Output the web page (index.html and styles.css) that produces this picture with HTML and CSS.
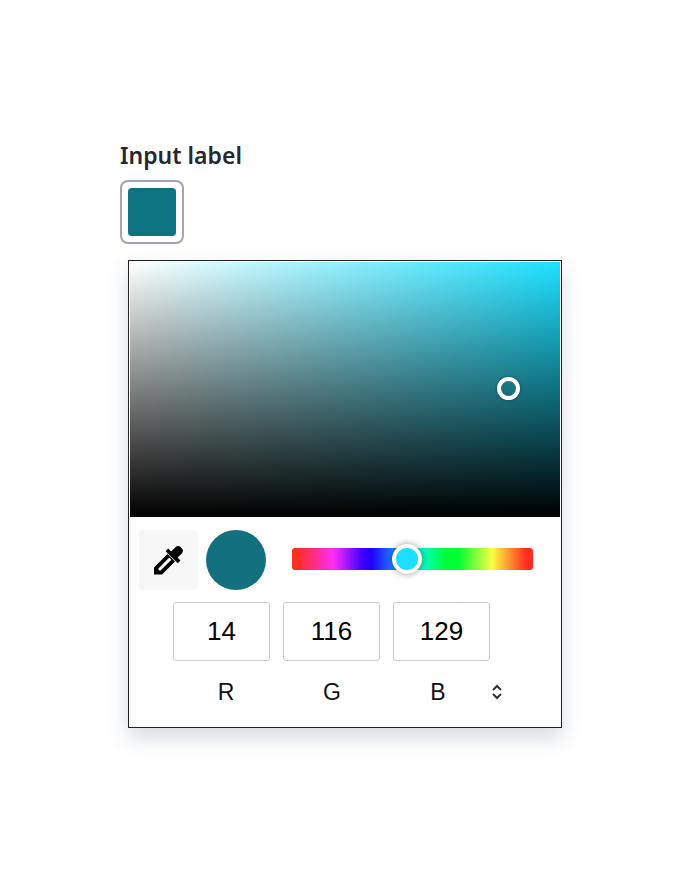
FILE: index.html
```html
<!DOCTYPE html>
<html lang="en">
<head>
    <meta charset="UTF-8">
    <meta name="viewport" content="width=device-width, initial-scale=1.0">
    <title>Color input</title>
    <link rel="stylesheet" href="styles.css">
</head>
<body>
    <main class="field">
        <label class="field-label" for="color-input">Input label</label>
        <input class="color-input" type="color" id="color-input" value="#0e7481">

        <section class="picker">
            <div class="shade-area">
                <span class="shade-handle"></span>
            </div>

            <div class="hue-row">
                <button class="eyedropper" type="button" aria-label="Pick a color">
                    <svg width="30" height="30" viewBox="0 0 30 30">
                        <path d="M0 29.5V22.5L13.5 9L21 16.5L8 29.5ZM4 24L6 26L17.4 14.8L15.2 12.6Z" fill="#000" fill-rule="evenodd"/>
                        <path d="M11.6 6.2L14.2 3.6L17.2 6.4L21.4 2.2Q24 0 26.2 1.8L28 3.6Q30 6 27.8 8.4L23.6 12.6L26.4 15.6L23.8 18.2Z" fill="#000"/>
                    </svg>
                </button>
                <span class="preview"></span>
                <input class="hue-slider" type="range" min="0" max="360" value="171" aria-label="Hue">
            </div>

            <div class="values">
                <input type="text" id="red" value="14">
                <input type="text" id="green" value="116">
                <input type="text" id="blue" value="129">
            </div>

            <div class="channels">
                <label for="red">R</label>
                <label for="green">G</label>
                <label for="blue">B</label>
                <button class="format-toggle" type="button" aria-label="Change format">
                    <svg width="12" height="16" viewBox="0 0 12 16">
                        <path d="M2 6L6 2L10 6M2 10L6 14L10 10" fill="none" stroke="#333" stroke-width="2"/>
                    </svg>
                </button>
            </div>
        </section>
    </main>
</body>
</html>
```
FILE: styles.css
```css
* {
    box-sizing: border-box;
}

body {
    margin: 0;
    padding: 139px 128px 40px 120px;
    background-color: #fff;
    font-family: "Liberation Sans", Arial, sans-serif;
}

.field {
    max-width: 480px;
}

.field-label {
    display: block;
    margin-bottom: 9px;
    font-family: "Noto Sans", sans-serif;
    font-size: 23px;
    font-weight: 600;
    line-height: 32px;
    color: #28272d;
}

.color-input {
    display: block;
    width: 64px;
    height: 64px;
    padding: 6px;
    border: 2px solid #a2a3b5;
    border-radius: 8px;
    background-color: #fff;
    appearance: none;
}

.color-input::-webkit-color-swatch-wrapper {
    padding: 0;
}

.color-input::-webkit-color-swatch {
    border: none;
    border-radius: 4px;
}

/* popup panel */
.picker {
    margin: 16px 0 0 8px;
    padding: 1px;
    border: 1px solid #222;
    background-color: #fff;
    box-shadow: 0 10px 20px rgba(50, 70, 100, 0.2);
}

.shade-area {
    position: relative;
    height: 255px;
    background: linear-gradient(to top, #000, transparent), linear-gradient(to right, #fff, #1ce0ff);
}

.shade-handle {
    position: absolute;
    left: 88%;
    top: 50%;
    width: 23px;
    height: 23px;
    margin: -13px 0 0 -11px;
    border: 4px solid #fff;
    border-radius: 50%;
    box-shadow: 0 0 3px rgba(0, 0, 0, 0.4);
}

.hue-row {
    display: flex;
    align-items: center;
    padding: 13px 27px 12px 9px;
}

.eyedropper {
    display: flex;
    align-items: center;
    justify-content: center;
    width: 59px;
    height: 60px;
    padding: 0;
    border: none;
    border-radius: 3px;
    background-color: #f7f7f7;
}

.preview {
    width: 60px;
    height: 60px;
    margin: 0 26px 0 8px;
    border-radius: 50%;
    background-color: #13717f;
}

.hue-slider {
    flex: 1;
    min-width: 0;
    height: 22px;
    margin: 0 0 2px;
    border-radius: 3px;
    background: linear-gradient(to right, #ff2d1f 2%, #ff2df6 17%, #4400ff 29%, #2000ff 33%, #1ce0ff 49%, #00ff9c 57%, #00ff33 64%, #00ff33 69%, #faff42 83%, #ff2d1f 97%);
    appearance: none;
}

.hue-slider::-webkit-slider-thumb {
    width: 30px;
    height: 30px;
    border: 4px solid #fff;
    border-radius: 50%;
    background-color: #1ce0ff;
    box-shadow: 0 0 6px rgba(0, 0, 0, 0.4);
    appearance: none;
}

.values {
    display: flex;
    gap: 13px;
    padding-left: 43px;
}

.values input {
    width: 97px;
    height: 59px;
    padding: 0;
    border: 1px solid #ccc;
    border-radius: 3px;
    font-family: inherit;
    font-size: 26px;
    text-align: center;
    color: #000;
}

.channels {
    display: flex;
    align-items: center;
    padding: 16px 0 19px 43px;
}

.channels label {
    width: 106px;
    font-size: 23px;
    line-height: 30px;
    text-align: center;
    color: #111;
}

.format-toggle {
    display: flex;
    padding: 0;
    border: none;
    background: none;
}
```
